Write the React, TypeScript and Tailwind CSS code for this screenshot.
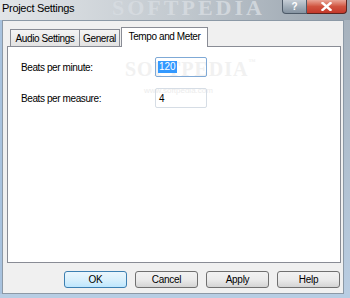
import React from 'react';

const Tab: React.FC<{ label: string; active?: boolean; className?: string }> = ({ label, active, className }) => (
    <div
        className={`flex items-center justify-center border border-b-0 border-[#898c95] text-[10px] tracking-[-0.4px] text-black ${active
                ? 'h-[20px] -mb-px bg-white relative z-10 pb-[2px]'
                : 'h-[17px] bg-gradient-to-b from-[#f4f4f4] to-[#e2e2e2] pt-px'
            } ${className ?? ''}`}
    >
        {label}
    </div>
);

const DialogButton: React.FC<{ label: string; isDefault?: boolean }> = ({ label, isDefault }) => (
    <button
        className={`w-[63px] h-[17px] rounded-[3px] border text-[10px] tracking-[-0.3px] text-black leading-none ${isDefault
                ? 'border-[#3c7fb1] bg-gradient-to-b from-[#eaf6fd] via-[#d9f0fc] to-[#bee6fd]'
                : 'border-[#707070] bg-gradient-to-b from-[#f2f2f2] via-[#ebebeb] to-[#d4d4d4]'
            }`}
    >
        {label}
    </button>
);

export default function App() {
    return (
        <div className="w-[350px] h-[298px] flex flex-col overflow-hidden bg-[#b3c8dd] font-['Liberation_Sans',Arial,sans-serif]">
            {/* Title bar */}
            <div className="relative h-[20px] shrink-0 bg-gradient-to-r from-[#e2e5e8] via-[#c3cad0] to-[#97a2ad] overflow-hidden">
                <div className="absolute left-[112px] top-[-3px] text-[22px] font-bold tracking-[3px] text-[#d8dde2] opacity-80 font-['Liberation_Serif',serif] leading-none select-none">
                    SOFTPEDIA
                </div>
                <div className="relative pl-[2px] pt-[3px] text-[11px] tracking-[-0.3px] text-black leading-none">
                    Project Settings
                </div>
                {/* caption buttons */}
                <div className="absolute top-0 right-[3px] flex">
                    <div className="w-[25px] h-[14px] rounded-bl-[4px] border border-t-0 border-[#4d5a68] bg-gradient-to-b from-[#c6ced6] via-[#a3afba] to-[#8593a1] flex items-center justify-center text-[10px] font-bold text-white leading-none">
                        ?
                    </div>
                    <div className="w-[40px] h-[14px] rounded-br-[4px] border border-t-0 border-l-0 border-[#5b2520] bg-gradient-to-b from-[#e8a597] via-[#d0533f] to-[#c4382a] flex items-center justify-center">
                        <svg width="11" height="9" viewBox="0 0 11 9">
                            <path d="M1.5 1 L9.5 8 M9.5 1 L1.5 8" stroke="#ffffff" strokeWidth="2.4" strokeLinecap="square" />
                        </svg>
                    </div>
                </div>
            </div>

            {/* Frame + client */}
            <div className="flex flex-1 min-h-0">
                <div className="w-[2px] bg-[#a8c2de]" />
                <div className="flex-1 flex flex-col border border-[#8c99a6] bg-[#f0f0f0] pl-[4px] pr-[2px]">
                    {/* Tabs */}
                    <div className="flex items-end h-[19px] mt-[6px] pl-[3px]">
                        <Tab label="Audio Settings" className="w-[70px]" />
                        <Tab label="General" className="w-[41px] -ml-px" />
                        <Tab label="Tempo and Meter" active className="w-[87px] ml-[1px]" />
                    </div>

                    {/* Panel */}
                    <div className="relative h-[217px] border border-[#898c95] bg-white">
                        {/* watermark */}
                        <div className="pointer-events-none absolute left-[117px] top-[12px] text-[20px] font-bold tracking-[1px] text-[#f1f1f1] font-['Liberation_Serif',serif] leading-none">
                            SOFTPEDIA<span className="text-[7px] align-top">™</span>
                        </div>
                        <div className="pointer-events-none absolute left-[136px] top-[40px] text-[8px] text-[#ececec] leading-none">
                            www.softpedia.com
                        </div>

                        <div className="relative pl-[13px] pt-[10px] flex flex-col gap-[11px]">
                            <div className="flex items-center h-[20px]">
                                <div className="w-[134px] text-[10px] tracking-[-0.4px] text-black">Beats per minute:</div>
                                <div className="w-[52px] h-[20px] rounded-[2px] border border-[#7fa9d6] flex items-center pl-[2px]">
                                    <span className="bg-[#3399ff] text-white text-[10px] leading-[12px] px-px">120</span>
                                </div>
                            </div>
                            <div className="flex items-center h-[20px]">
                                <div className="w-[134px] text-[10px] tracking-[-0.4px] text-black">Beats per measure:</div>
                                <div className="w-[52px] h-[20px] rounded-[2px] border border-[#d6dde5] flex items-center pl-[3px] text-[10px] text-black">
                                    4
                                </div>
                            </div>
                        </div>
                    </div>

                    {/* Buttons */}
                    <div className="flex justify-end gap-[8px] mt-[8px] pr-px">
                        <DialogButton label="OK" isDefault />
                        <DialogButton label="Cancel" />
                        <DialogButton label="Apply" />
                        <DialogButton label="Help" />
                    </div>
                </div>
                <div className="w-[6px] bg-gradient-to-b from-[#a7b2bd] to-[#b9cde2]" />
            </div>
            <div className="h-[4px] shrink-0 bg-[#b7cde3]" />
        </div>
    );
}
